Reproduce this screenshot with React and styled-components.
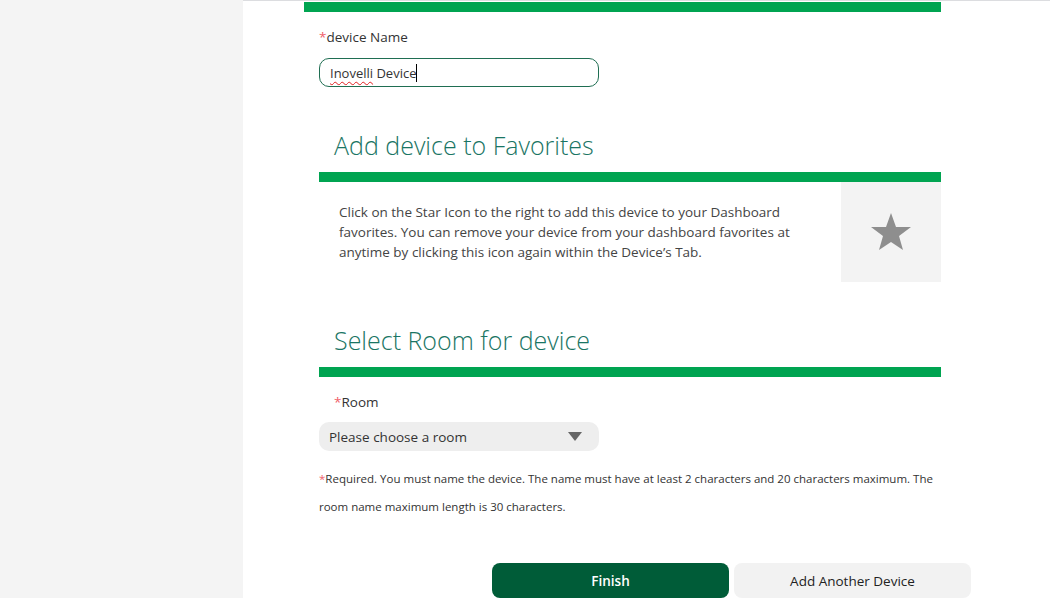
import React from 'react';
import styled, { createGlobalStyle } from 'styled-components';

const GlobalStyle = createGlobalStyle`
    html, body {
        margin: 0;
        padding: 0;
        background: #ffffff;
        font-family: "Open Sans", "Liberation Sans", sans-serif;
    }
`;

export default function App() {
    return (
        <>
            <GlobalStyle />
            <Page>
                <Sidebar />
                <Main>
                    <FormColumn>
                        <GreenBar $inset={0} />

                        <Field>
                            <Label><Req>*</Req>device Name</Label>
                            <NameInput>
                                <Misspelled>Inovelli</Misspelled>&nbsp;Device<Caret />
                            </NameInput>
                        </Field>

                        <SectionTitle>Add device to Favorites</SectionTitle>
                        <GreenBar $inset={15} />
                        <FavoriteRow>
                            <FavoriteText>
                                Click on the Star Icon to the right to add this device to your Dashboard
                                favorites. You can remove your device from your dashboard favorites at
                                anytime by clicking this icon again within the Device’s Tab.
                            </FavoriteText>
                            <StarBox>
                                <svg width="42" height="40" viewBox="0 0 42 40">
                                    <polygon
                                        points="21,1 26,15 41,15 29,24 33,38 21,30 9,38 13,24 1,15 16,15"
                                        fill="#8e8e8e"
                                    />
                                </svg>
                            </StarBox>
                        </FavoriteRow>

                        <SectionTitle>Select Room for device</SectionTitle>
                        <GreenBar $inset={15} />

                        <Field>
                            <Label $indent={15}><Req>*</Req>Room</Label>
                            <RoomSelect>
                                Please choose a room
                                <svg width="14" height="9" viewBox="0 0 14 9">
                                    <polygon points="0,0 14,0 7,9" fill="#666666" />
                                </svg>
                            </RoomSelect>
                        </Field>

                        <Note>
                            <Req>*</Req>Required. You must name the device. The name must have at least 2 characters and 20 characters maximum. The
                            room name maximum length is 30 characters.
                        </Note>

                        <Actions>
                            <ActionButton $primary>Finish</ActionButton>
                            <ActionButton>Add Another Device</ActionButton>
                        </Actions>
                    </FormColumn>
                </Main>
            </Page>
        </>
    );
}

/* Styled Components */
const Page = styled.div`
    display: flex;
    min-height: 100vh;
`;

const Sidebar = styled.aside`
    width: 243px;
    flex-shrink: 0;
    background-color: #f4f4f4;
`;

const Main = styled.main`
    flex: 1;
    border-top: 1px solid #dcdde0;
    padding-left: 61px;
`;

const FormColumn = styled.div`
    width: 667px;
    display: flex;
    flex-direction: column;
`;

const GreenBar = styled.div`
    height: 10px;
    margin-left: ${p => p.$inset}px;
    width: ${p => 637 - p.$inset}px;
    margin-top: ${p => (p.$inset === 0 ? 1 : 10)}px;
    background-color: #00a451;
`;

const Field = styled.div`
    display: flex;
    flex-direction: column;
    margin-left: 15px;
    margin-top: 15px;
`;

const Label = styled.div`
    font-size: 13.5px;
    line-height: 20px;
    color: #333333;
    padding-left: ${p => p.$indent || 0}px;
    margin-bottom: 10px;
`;

const Req = styled.span`
    color: #f0606a;
`;

const NameInput = styled.div`
    box-sizing: border-box;
    width: 280px;
    height: 29px;
    margin-top: 1px;
    display: flex;
    align-items: center;
    padding: 0 10px;
    border: 1px solid #1f6e52;
    border-radius: 10px;
    font-size: 13px;
    color: #333333;
`;

const Misspelled = styled.span`
    text-decoration: underline wavy #e02020;
    text-decoration-thickness: 1px;
    text-underline-offset: 3px;
`;

const Caret = styled.span`
    display: inline-block;
    width: 1px;
    height: 18px;
    background: #000000;
`;

const SectionTitle = styled.h2`
    margin: 41px 0 0 30px;
    font-size: 25px;
    line-height: 34px;
    font-weight: 300;
    color: #1a7564;
`;

const FavoriteRow = styled.div`
    display: flex;
    margin-left: 15px;
    width: 622px;
    height: 100px;
`;

const FavoriteText = styled.p`
    flex: 1;
    margin: 0;
    padding: 20px 20px 0;
    font-size: 13.5px;
    line-height: 20px;
    color: #444444;
`;

const StarBox = styled.div`
    width: 100px;
    height: 100px;
    display: flex;
    align-items: center;
    justify-content: center;
    background-color: #f3f3f3;
`;

const RoomSelect = styled.div`
    box-sizing: border-box;
    width: 280px;
    height: 29px;
    display: flex;
    align-items: center;
    justify-content: space-between;
    padding: 0 17px 0 10px;
    background-color: #eeeeee;
    border-radius: 10px;
    font-size: 13.5px;
    color: #333333;
`;

const Note = styled.p`
    width: 622px;
    margin: 14px 0 0 15px;
    font-size: 11.5px;
    line-height: 28px;
    color: #333333;
`;

const Actions = styled.div`
    display: flex;
    justify-content: flex-end;
    gap: 5px;
    margin-top: 42px;
`;

const ActionButton = styled.button`
    width: 237px;
    height: 35px;
    border: none;
    border-radius: 8px;
    font-family: inherit;
    font-size: 13.5px;
    font-weight: ${p => (p.$primary ? 600 : 400)};
    color: ${p => (p.$primary ? '#ffffff' : '#222222')};
    background-color: ${p => (p.$primary ? '#005c38' : '#f2f2f2')};
    cursor: pointer;
`;
